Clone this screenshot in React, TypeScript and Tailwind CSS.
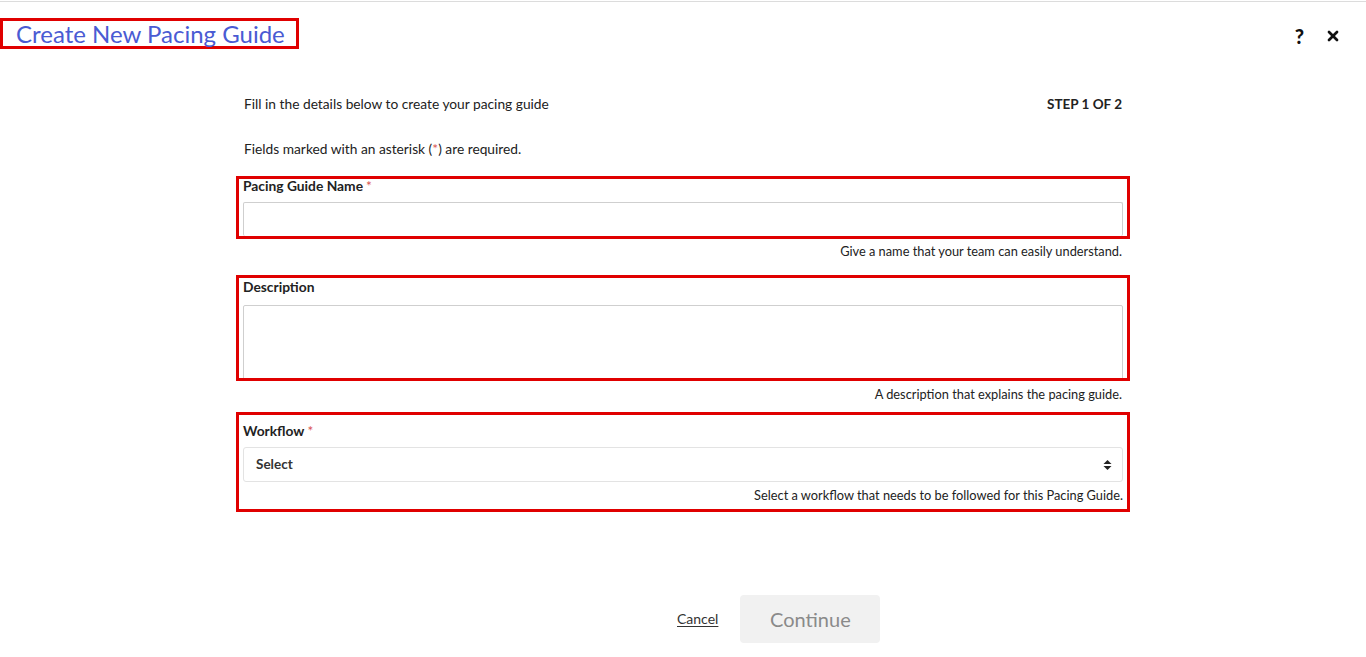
import { X } from "lucide-react";

const font = { fontFamily: "Lato, 'Open Sans', sans-serif" };

function Req() {
  return <span className="ml-[3px] font-normal text-[#d9534f]">*</span>;
}

export default function App() {
  return (
    <div className="min-h-screen bg-white pt-px text-[13.75px] text-[#222]" style={font}>
      <div className="border-t border-[#dcdcdc]">
        {/* header */}
        <div className="flex items-start justify-between">
          <div className="mt-[16px] border-[3px] border-[#e00000] pl-[13px] pr-[11px] text-[24px] leading-[25px] text-[#4a5bd3]">
            Create New Pacing Guide
          </div>
          <div className="mr-[25px] mt-[21px] flex items-center gap-[21px]">
            <span className="text-[20px] font-black leading-[26px] text-[#111]">?</span>
            <X className="h-[16px] w-[16px] text-[#111]" strokeWidth={4} />
          </div>
        </div>

        {/* form */}
        <div className="mx-auto mt-[45px] w-[878px]">
          <div className="flex h-[20px] items-center justify-between leading-[20px]">
            <span>Fill in the details below to create your pacing guide</span>
            <span className="text-[13.5px] font-bold">STEP 1 OF 2</span>
          </div>
          <div className="mt-[25px] leading-[20px]">
            Fields marked with an asterisk (<span className="text-[#d9534f]">*</span>) are required.
          </div>

          <div className="-mx-[8px] mt-[17px] border-[3px] border-[#e00000] px-[4px]">
            <label className="-mt-[1px] block text-[13.8px] font-bold leading-[16px]">
              Pacing Guide Name
              <Req />
            </label>
            <input className="mt-[8px] block h-[34px] w-full rounded-[2px] border border-b-0 border-[#cfcfcf] outline-none" />
          </div>
          <div className="mt-[4px] text-right text-[12.8px] leading-[16px]">
            Give a name that your team can easily understand.
          </div>

          <div className="-mx-[8px] mt-[16px] h-[106px] overflow-hidden border-[3px] border-[#e00000] px-[4px]">
            <label className="mt-[1px] block text-[13.8px] font-bold leading-[16px]">Description</label>
            <textarea className="mt-[10px] block h-[90px] w-full resize-none rounded-[2px] border border-[#cfcfcf] outline-none" />
          </div>
          <div className="mt-[5px] text-right text-[12.8px] leading-[16px]">
            A description that explains the pacing guide.
          </div>

          <div className="-mx-[8px] mt-[10px] border-[3px] border-[#e00000] px-[4px] pb-[6px] pt-[8px]">
            <label className="block text-[13.8px] font-bold leading-[16px]">
              Workflow
              <Req />
            </label>
            <div className="mt-[8px] flex h-[35px] items-center justify-between rounded-[3px] border border-[#e3e3e3] pl-[12px] pr-[10px]">
              <span className="text-[13.5px] font-bold text-[#333]">Select</span>
              <svg width="9" height="12" viewBox="0 0 9 12" fill="#222">
                <path d="M4.5 1 L8.5 5 H0.5 Z" />
                <path d="M4.5 11 L8.5 7 H0.5 Z" />
              </svg>
            </div>
            <div className="mt-[5px] text-right text-[12.8px] leading-[16px]">
              Select a workflow that needs to be followed for this Pacing Guide.
            </div>
          </div>

          <div className="mt-[83px] flex items-center pl-[433px]">
            <a href="#" className="-mt-[1px] text-[14px] text-[#333] underline underline-offset-2">
              Cancel
            </a>
            <button
              type="button"
              disabled
              className="ml-[22px] h-[48px] w-[140px] rounded-[4px] bg-[#f1f1f1] text-[20px] text-[#8a8a8a]"
            >
              Continue
            </button>
          </div>
        </div>
      </div>
    </div>
  );
}
